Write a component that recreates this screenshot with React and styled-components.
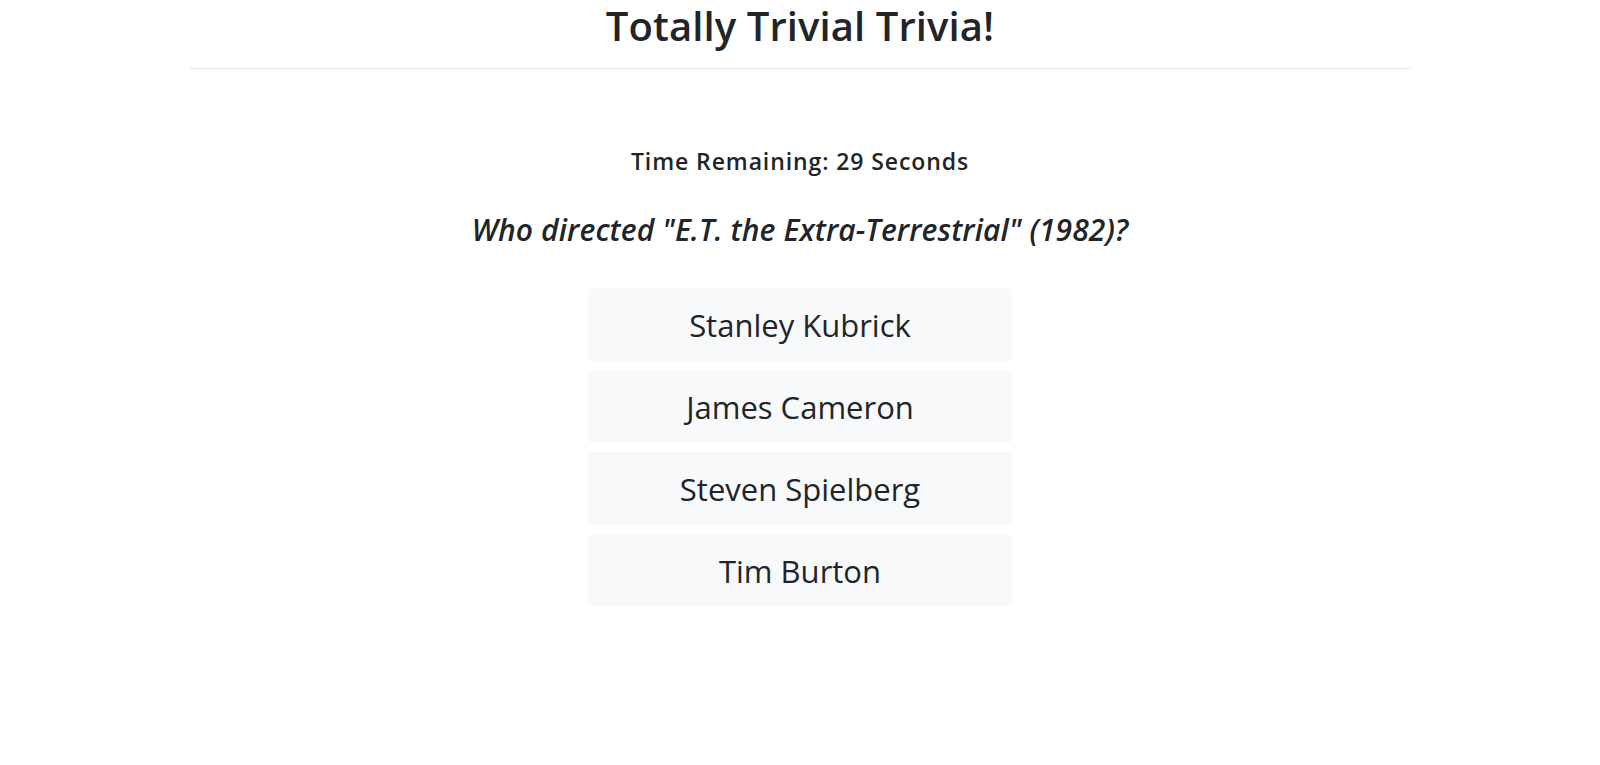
import React from "react";
import styled, { createGlobalStyle } from "styled-components";

const Global = createGlobalStyle`
  html, body { margin: 0; padding: 0; background: #fff; }
  body {
    font-family: "Open Sans", "Noto Sans", sans-serif;
    color: #212529;
  }
`;

const Page = styled.div`
  width: 1221px;
  margin: 0 auto;
  display: flex;
  flex-direction: column;
  align-items: center;
`;

const Title = styled.h1`
  margin: 0;
  height: 68px;
  box-sizing: border-box;
  padding-top: 0;
  font-size: 40px;
  line-height: 52px;
  font-weight: 600;
  letter-spacing: 0.1px;
  text-align: center;
`;

const Rule = styled.hr`
  width: 100%;
  margin: 0;
  border: 0;
  border-top: 1px solid #e6e6e6;
`;

const Game = styled.section`
  display: flex;
  flex-direction: column;
  align-items: center;
  padding-top: 74px;
`;

const Timer = styled.h5`
  margin: 0;
  font-size: 23px;
  line-height: 36px;
  font-weight: 600;
  letter-spacing: 0.9px;
`;

const Question = styled.h4`
  margin: 30px 0 0;
  font-size: 30px;
  line-height: 42px;
  font-weight: 600;
  font-style: italic;
  letter-spacing: 0.1px;
`;

const Answers = styled.div`
  margin-top: 37px;
  width: 424px;
  display: flex;
  flex-direction: column;
  gap: 9px;
`;

const Answer = styled.button`
  height: 73px;
  border: 0;
  border-radius: 5px;
  background: #f8f9fa;
  color: #212529;
  font-family: "Open Sans", "Noto Sans", sans-serif;
  font-size: 31px;
  letter-spacing: 0;
  cursor: pointer;
`;

const answers = ["Stanley Kubrick", "James Cameron", "Steven Spielberg", "Tim Burton"];

export default function App() {
  return (
    <>
      <Global />
      <Page>
        <Title>Totally Trivial Trivia!</Title>
        <Rule />
        <Game>
          <Timer>Time Remaining: 29 Seconds</Timer>
          <Question>Who directed "E.T. the Extra-Terrestrial" (1982)?</Question>
          <Answers>
            {answers.map((a) => (
              <Answer key={a}>{a}</Answer>
            ))}
          </Answers>
        </Game>
      </Page>
    </>
  );
}
